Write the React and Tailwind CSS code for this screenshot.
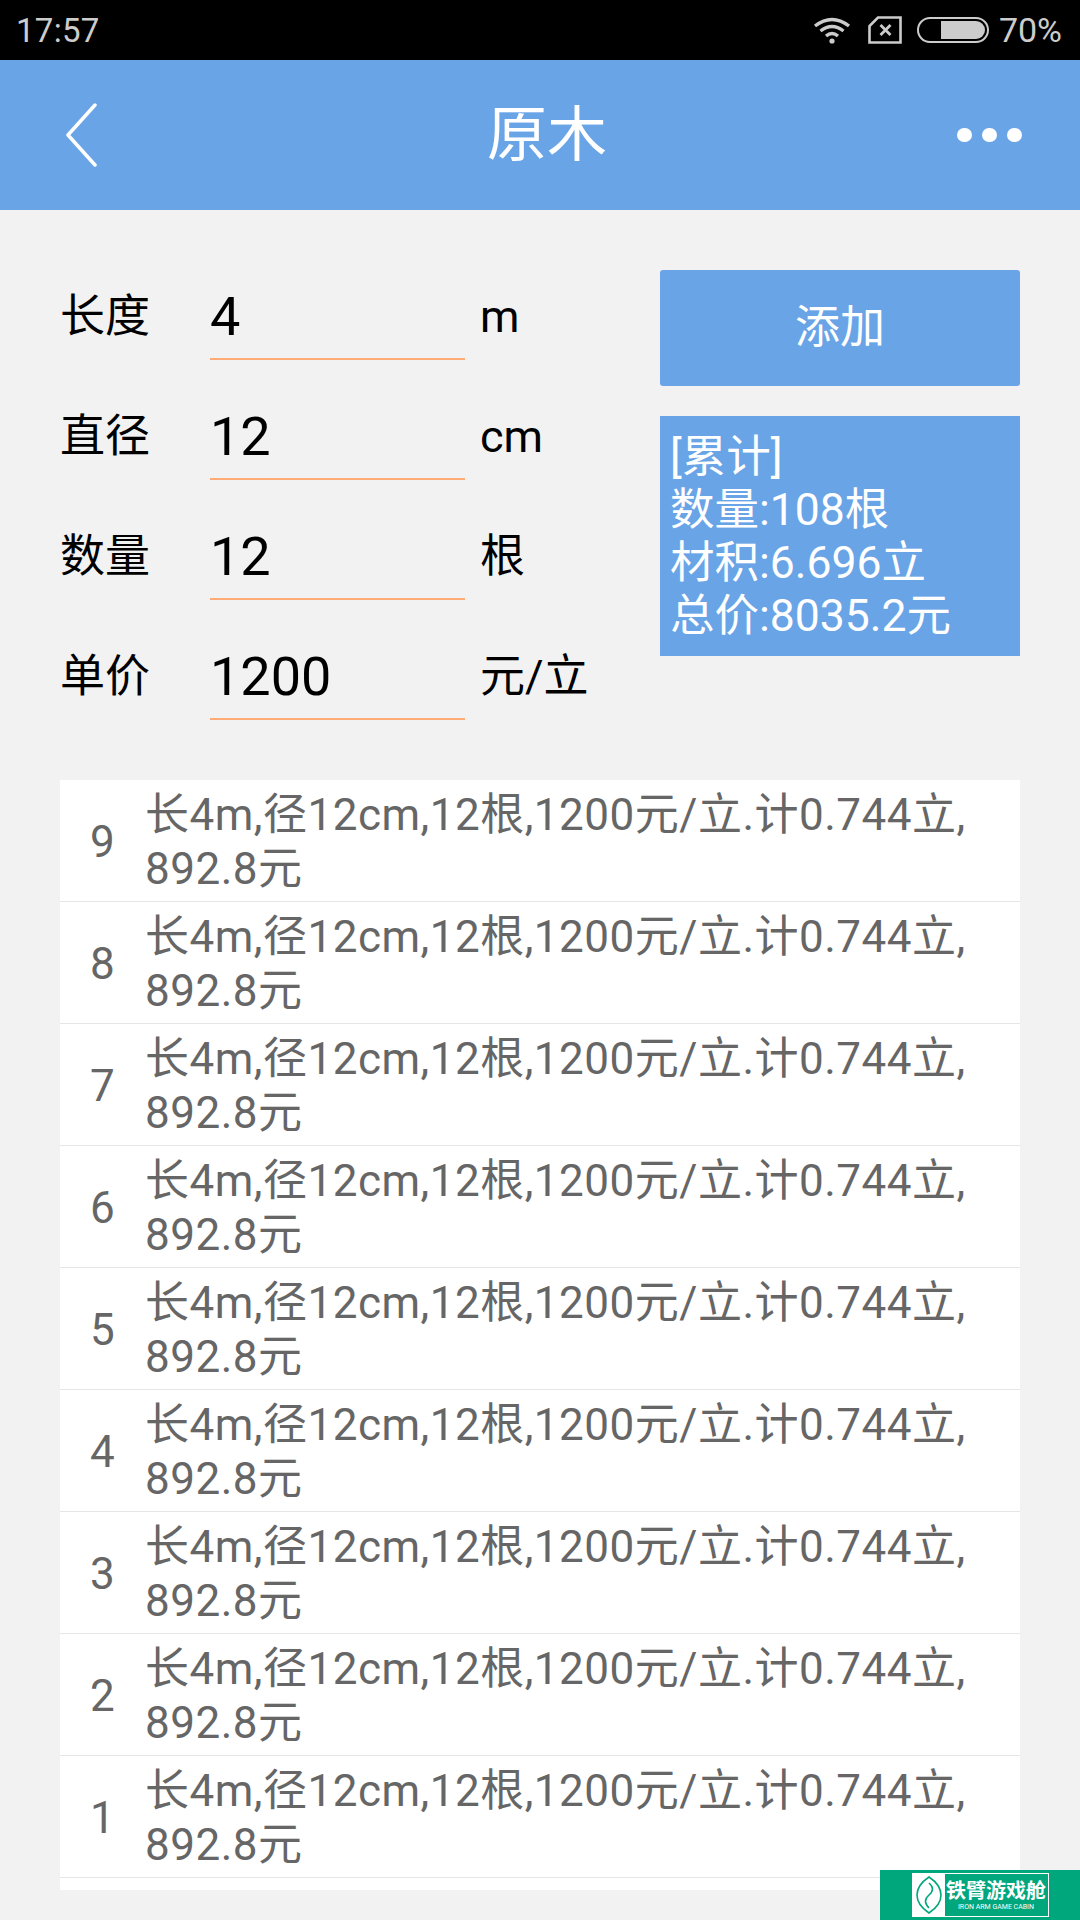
import React from "react";

const fields = [
  { label: "长度", value: "4", unit: "m" },
  { label: "直径", value: "12", unit: "cm" },
  { label: "数量", value: "12", unit: "根" },
  { label: "单价", value: "1200", unit: "元/立" },
];

const rows = [9, 8, 7, 6, 5, 4, 3, 2, 1];

const StatusBar = () => (
  <div className="h-[60px] bg-black flex items-center justify-between pl-[16px] pr-[18px] text-[#cccccc]">
    <span className="text-[33px] tracking-[0.3px] leading-none">17:57</span>
    <div className="flex items-center">
      <svg width="38" height="28" viewBox="0 0 38 28" fill="none" stroke="#cccccc" strokeWidth="3.4">
        <path d="M2 10 Q19 -3 36 10" />
        <path d="M7.5 15 Q19 6 30.5 15" />
        <path d="M13 20 Q19 15 25 20" />
        <circle cx="19" cy="25" r="2.6" fill="#cccccc" stroke="none" />
      </svg>
      <svg className="ml-[17px]" width="34" height="28" viewBox="0 0 34 28" fill="none" stroke="#cccccc" strokeWidth="2.6">
        <path d="M10 1.5 H32.5 V26.5 H1.5 V10 Z" />
        <path d="M12.5 9 L22.5 19 M22.5 9 L12.5 19" strokeWidth="2.8" />
      </svg>
      <div className="ml-[15px] w-[72px] h-[26px] rounded-[13px] border-2 border-[#cccccc] p-[2px] flex justify-end">
        <div className="w-[44px] h-full bg-[#cccccc] rounded-r-[10px]" />
      </div>
      <span className="ml-[10px] text-[34px] leading-none">70%</span>
    </div>
  </div>
);

const Header = () => (
  <div className="h-[150px] bg-[#69a4e7] flex items-center justify-between relative">
    <svg className="ml-[64px]" width="34" height="64" viewBox="0 0 34 64" fill="none" stroke="white" strokeWidth="3.5" strokeLinecap="round" strokeLinejoin="round">
      <path d="M31 2 L4 32 L31 62" />
    </svg>
    <span className="absolute left-[14px] right-0 pt-[2px] text-center text-[60px] leading-none text-white">原木</span>
    <div className="mr-[58px] flex gap-[10px]">
      <div className="w-[15px] h-[14px] rounded-full bg-white" />
      <div className="w-[15px] h-[14px] rounded-full bg-white" />
      <div className="w-[15px] h-[14px] rounded-full bg-white" />
    </div>
  </div>
);

const Field = ({ label, value, unit }) => (
  <div className="flex h-[120px]">
    <span className="w-[150px] pt-[47px] text-[45px] leading-[60px] text-black">{label}</span>
    <div className="w-[255px] h-[120px] border-b-2 border-[#ffab76] pt-[47px] text-[54px] leading-[60px] text-black">{value}</div>
    <span className="ml-[15px] pt-[47px] text-[45px] leading-[60px] text-black">{unit}</span>
  </div>
);

const Row = ({ n }) => (
  <div className="h-[122px] flex border-b border-[#e6e6e6]">
    <span className="w-[85px] pt-[32px] pl-[30px] text-[44px] leading-[60px] text-[#666666]">{n}</span>
    <p className="w-[870px] text-[44px] leading-[54px] pt-[8px] text-[#666666] tracking-[0.5px]">
      <span className="block whitespace-nowrap">长4m,径12cm,12根,1200元/立.计0.744立,</span>
      <span className="block">892.8元</span>
    </p>
  </div>
);

const App = () => {
  return (
    <div
      className="w-[1080px] h-[1920px] overflow-hidden relative bg-[#f2f2f2]"
      style={{ fontFamily: "Roboto, 'Noto Sans CJK SC', sans-serif" }}
    >
      <StatusBar />
      <Header />

      <div className="flex pl-[60px] pr-[60px] pt-[30px] h-[570px]">
        <div className="w-[600px]">
          {fields.map((f) => (
            <Field key={f.label} {...f} />
          ))}
        </div>
        <div className="w-[360px] pt-[30px]">
          <button className="w-full h-[116px] bg-[#69a4e7] rounded-[3px] text-white text-[45px]">添加</button>
          <div className="mt-[30px] h-[240px] bg-[#69a4e7] text-white text-[44.5px] leading-[53px] px-[10px] pt-[15px]">
            <div>[累计]</div>
            <div>数量:108根</div>
            <div>材积:6.696立</div>
            <div>总价:8035.2元</div>
          </div>
        </div>
      </div>

      <div className="mx-[60px] h-[1110px] bg-white">
        {rows.map((n) => (
          <Row key={n} n={n} />
        ))}
      </div>

      <div className="absolute right-0 bottom-0 w-[200px] h-[50px] bg-[#00a67c] flex items-center justify-center">
        <div className="w-[137px] h-[44px] bg-white border border-white flex">
          <div className="w-[32px] flex items-center justify-center">
            <svg width="28" height="40" viewBox="0 0 28 40" fill="none" stroke="#00a67c" strokeWidth="1.6">
              <path d="M14 2 Q26 10 26 20 Q26 30 14 38 Q2 30 2 20 Q2 10 14 2 Z" />
              <path d="M14 8 Q21 14 14 20 Q7 26 14 33" />
            </svg>
          </div>
          <div className="flex-1 bg-[#00a67c] flex flex-col items-center justify-center text-white">
            <span className="text-[20px] leading-[24px] font-bold whitespace-nowrap">铁臂游戏舱</span>
            <span className="text-[7px] leading-[9px] whitespace-nowrap">IRON ARM GAME CABIN</span>
          </div>
        </div>
      </div>
    </div>
  );
};

export default App;
